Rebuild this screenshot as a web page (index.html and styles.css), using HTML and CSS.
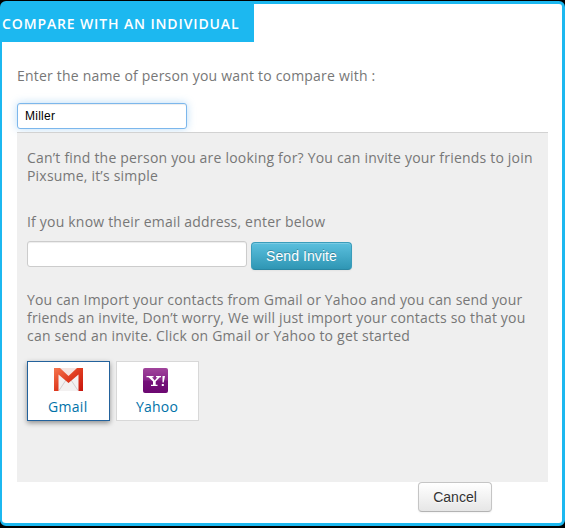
FILE: index.html
```html
<!DOCTYPE html>
<html lang="en">
<head>
<meta charset="utf-8">
<title>Compare with an individual</title>
<link rel="stylesheet" href="styles.css">
</head>
<body>
<main class="modal">
  <h1 class="modal-title">COMPARE WITH AN INDIVIDUAL</h1>
  <div class="modal-body">
    <label class="prompt" for="name">Enter the name of person you want to compare with :</label>
    <input class="field name-field" id="name" type="text" value="Miller">
    <section class="panel">
      <p class="missing">Can’t find the person you are looking for? You can invite your friends to join<br>Pixsume, it’s simple</p>
      <label class="email-label" for="email">If you know their email address, enter below</label>
      <div class="invite-row">
        <input class="field email-field" id="email" type="text">
        <button class="btn btn-info">Send Invite</button>
      </div>
      <p class="import">You can Import your contacts from Gmail or Yahoo and you can send your<br>friends an invite, Don’t worry, We will just import your contacts so that you<br><span class="last-line">can send an invite. Click on Gmail or Yahoo to get started</span></p>
      <div class="providers">
        <a class="provider selected">
          <svg width="29" height="25" viewBox="0 0 29 25">
            <defs>
              <linearGradient id="red" x1="0" y1="0" x2="1" y2="1"><stop offset="0" stop-color="#f6774f"/><stop offset=".5" stop-color="#df3b1f"/><stop offset="1" stop-color="#c8140c"/></linearGradient>
            </defs>
            <rect y="0" width="29" height="23" fill="#f3f1f1"/>
            <path d="M5 22.500L12 12M24 22.500L17 12" stroke="#d3cfcf" stroke-width="1" fill="none"/>
            <path d="M5 0H24L14.500 9Z" fill="#f5e4e0"/>
            <path d="M0 0H6L14.500 8L23 0H29V23H24.500V6.500L14.500 15L4.500 6.500V23H0Z" fill="url(#red)"/>
          </svg>
          <span>Gmail</span>
        </a>
        <a class="provider">
          <svg width="25" height="25" viewBox="0 0 25 25">
            <defs><linearGradient id="purple" x1="0" y1="0" x2="0" y2="1"><stop offset="0" stop-color="#a0449b"/><stop offset=".48" stop-color="#88268a"/><stop offset=".52" stop-color="#75107a"/><stop offset="1" stop-color="#6c0871"/></linearGradient></defs>
            <rect width="25" height="25" rx="2" fill="url(#purple)"/>
            <path d="M3.500 8H10.500V9.200H9L11.700 12.400L14.500 9.200H13V8H18V9.200H16.800L12.700 13.500V16.800H14.500V18H8V16.800H10V13.500L5.500 9.200H3.500ZM19.500 8H22L20.700 14.500H19.500ZM18.800 16H20.800V18H18.800Z" fill="#fff"/>
          </svg>
          <span>Yahoo</span>
        </a>
      </div>
    </section>
    <footer class="actions"><button class="btn">Cancel</button></footer>
  </div>
</main>
</body>
</html>
```
FILE: styles.css
```css
* { box-sizing: border-box; }

body {
  margin: 0;
  padding-top: 1px;
  height: 528px;
  overflow: hidden;
  background: #000;
  color: #777;
  font: 14px/18px "Open Sans", sans-serif;
  letter-spacing: 0.2px;
}

.modal {
  height: 525px;
  border: 3px solid #1cb8f0;
  border-left-width: 2px;
  border-radius: 6px;
  background: #fff;
}

.modal-title {
  width: 252px;
  height: 38px;
  margin: 0;
  background: #1cb8f0;
  color: #fff;
  font-size: 14px;
  font-weight: 600;
  line-height: 39px;
  letter-spacing: 0.87px;
  white-space: nowrap;
}

.modal-body { padding: 25px 14px 0 15px; }

.prompt, .email-label { display: block; }

.field {
  display: block;
  height: 26px;
  padding: 0 7px;
  border: 1px solid #ccc;
  border-radius: 3px;
  outline: 0;
  background: #fff;
  color: #000;
  font: 12px "Liberation Sans", sans-serif;
  letter-spacing: 0.25px;
  box-shadow: inset 0 1px 1px rgba(0, 0, 0, 0.075);
}

.name-field {
  width: 170px;
  margin-top: 18px;
  border-color: #7cb7ec;
  box-shadow: inset 0 1px 1px rgba(0, 0, 0, 0.075), 0 0 8px rgba(82, 168, 236, 0.4);
}

.panel {
  height: 350px;
  margin-top: 3px;
  padding: 16px 10px 0;
  border-top: 1px solid #d2d2d2;
  background: #efefef;
  white-space: nowrap;
}

.panel p { margin: 0; }

.panel .import { margin-top: 21px; letter-spacing: 0.18px; }

.last-line { letter-spacing: 0.21px; }

.email-label { margin-top: 28px; }

.invite-row {
  display: flex;
  gap: 4px;
  margin-top: 10px;
}

.email-field { width: 220px; }

.btn {
  height: 30px;
  padding: 0 13px;
  border: 1px solid #c5c5c5;
  border-bottom-color: #b3b3b3;
  border-radius: 4px;
  background: linear-gradient(#fff, #e6e6e6);
  color: #333;
  font: 14px/20px "Liberation Sans", sans-serif;
  text-shadow: 0 1px 1px rgba(255, 255, 255, 0.75);
  box-shadow: inset 0 1px 0 rgba(255, 255, 255, 0.2), 0 1px 2px rgba(0, 0, 0, 0.05);
}

.btn-info {
  width: 101px;
  height: 28px;
  margin-top: 1px;
  border-color: #3a9dbb #3a9dbb #2a86a2;
  background: linear-gradient(#5bc0de, #2f96b4);
  color: #fff;
  letter-spacing: 0.08px;
  text-shadow: 0 -1px 0 rgba(0, 0, 0, 0.25);
}

.providers {
  display: flex;
  gap: 6px;
  margin-top: 16px;
}

.provider {
  display: grid;
  grid-template-rows: 25px 18px;
  row-gap: 5px;
  justify-content: start;
  width: 83px;
  height: 60px;
  padding: 6px 0 0 19px;
  border: 1px solid #d8d8d8;
  background: #fff;
  color: #0072a8;
}

.provider svg { margin-left: 7px; }

.provider.selected {
  padding-left: 20px;
  border-color: #23629c;
  letter-spacing: 0.3px;
  box-shadow: 0 2px 5px rgba(0, 0, 0, 0.4);
}

.provider.selected svg { margin-left: 6px; }

.actions {
  display: flex;
  justify-content: flex-end;
  padding-right: 56px;
}

.actions .btn { width: 74px; }
```
